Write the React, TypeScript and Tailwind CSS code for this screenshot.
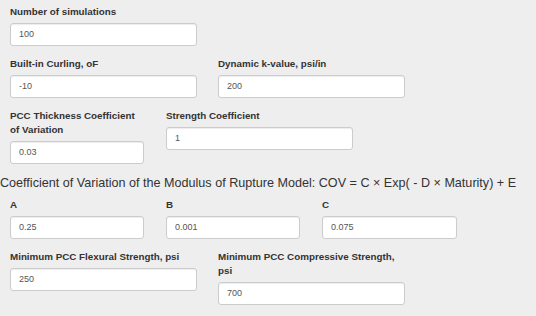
const labelCls =
  "block font-bold text-[9.8px] leading-[14px] text-[#333333] mb-[4px]";
const inputCls =
  "h-[23px] flex items-center bg-white border border-[#cccccc] rounded-[3px] px-[8px] text-[9px] text-[#555555] shadow-[inset_0_1px_1px_rgba(0,0,0,0.075)]";

function Field({
  label,
  value,
  width,
}: {
  label: React.ReactNode;
  value: string;
  width: string;
}) {
  return (
    <div className={width}>
      <label className={labelCls}>{label}</label>
      <div className={inputCls}>{value}</div>
    </div>
  );
}

export default function App() {
  return (
    <div
      className="w-[536px] h-[316px] overflow-hidden bg-[#eeeeee] pt-[5px]"
      style={{ fontFamily: '"Liberation Sans", Arial, sans-serif' }}
    >
      <div className="pl-[10px]">
        <Field label="Number of simulations" value="100" width="w-[187px]" />
      </div>

      <div className="pl-[10px] mt-[11px] flex gap-[21px]">
        <Field label="Built-in Curling, oF" value="-10" width="w-[187px]" />
        <Field label="Dynamic k-value, psi/in" value="200" width="w-[187px]" />
      </div>

      <div className="pl-[10px] mt-[11px] flex items-start gap-[22px]">
        <Field
          label={
            <>
              PCC Thickness Coefficient
              <br />
              of Variation
            </>
          }
          value="0.03"
          width="w-[134px]"
        />
        <Field label="Strength Coefficient" value="1" width="w-[187px]" />
      </div>

      <h4 className="mt-[9px] text-[12.6px] leading-[20px] text-[#333333] whitespace-nowrap">
        Coefficient of Variation of the Modulus of Rupture Model: COV = C × Exp( - D × Maturity) + E
      </h4>

      <div className="pl-[10px] mt-[5px] flex gap-[22px]">
        <Field label="A" value="0.25" width="w-[134px]" />
        <Field label="B" value="0.001" width="w-[134px]" />
        <Field label="C" value="0.075" width="w-[135px]" />
      </div>

      <div className="pl-[10px] mt-[11px] flex items-start gap-[21px]">
        <Field
          label="Minimum PCC Flexural Strength, psi"
          value="250"
          width="w-[187px]"
        />
        <Field
          label={
            <>
              Minimum PCC Compressive Strength,
              <br />
              psi
            </>
          }
          value="700"
          width="w-[187px]"
        />
      </div>
    </div>
  );
}
